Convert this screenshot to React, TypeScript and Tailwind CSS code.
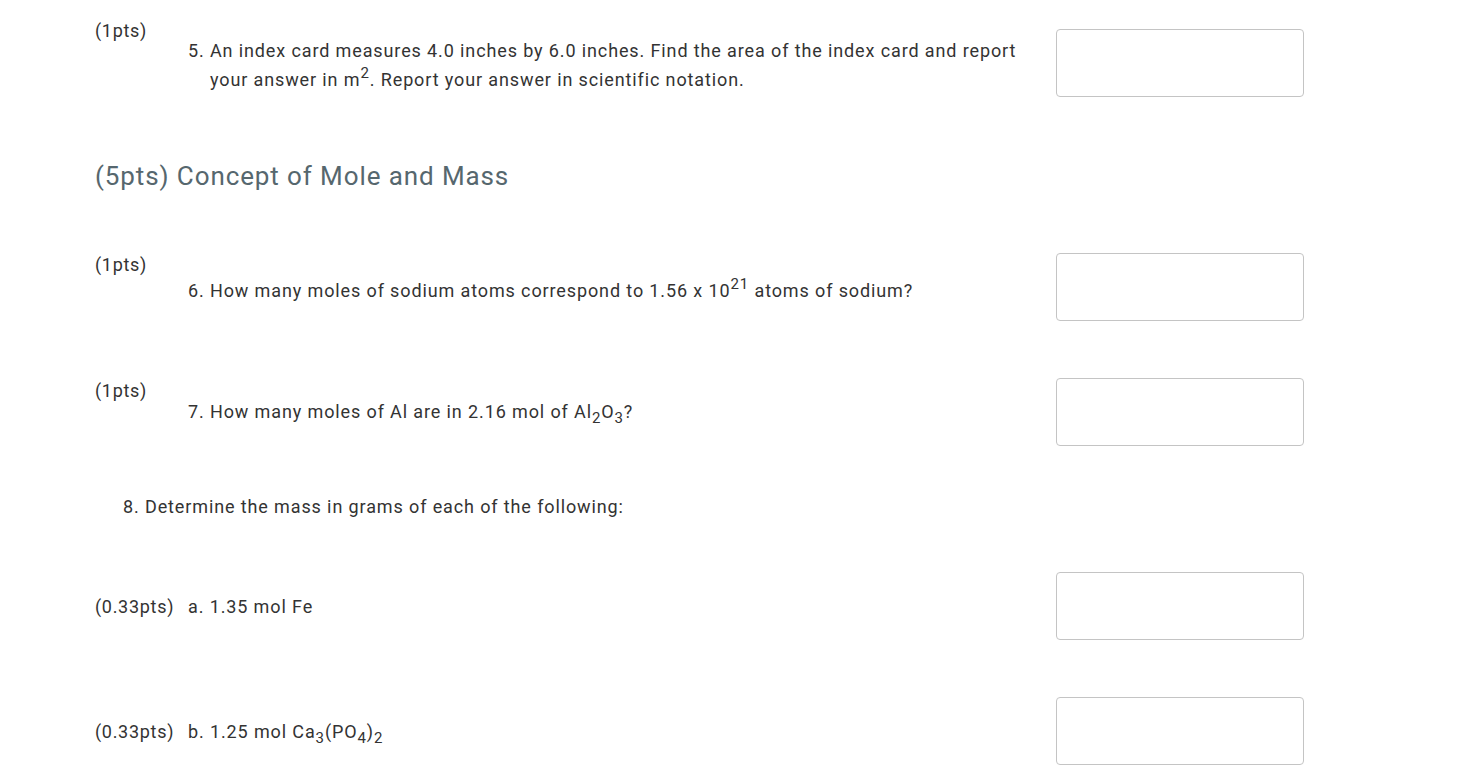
import React from "react";

const Box = ({ className = "" }: { className?: string }) => (
  <div className={`w-[248px] h-[68px] shrink-0 rounded-[4px] border border-[#c4c4c4] bg-white ${className}`} />
);

const Sup = ({ children }: { children: React.ReactNode }) => (
  <sup className="text-[15px] top-[-0.55em]">{children}</sup>
);
const Sub = ({ children }: { children: React.ReactNode }) => (
  <sub className="text-[15px] bottom-[-0.3em]">{children}</sub>
);

export default function App() {
  return (
    <div
      className="min-h-screen bg-white text-[#333333] text-[18px] tracking-[0.88px]"
      style={{ fontFamily: "Roboto, 'Liberation Sans', sans-serif" }}
    >
      <div className="ml-[95px] w-[1209px] pt-[17px] flex flex-col">
        {/* Q5 */}
        <div className="flex items-start">
          <div className="w-[93px] shrink-0 leading-[28px] tracking-[0.7px]">(1pts)</div>
          <div className="flex-1 mt-[19px] leading-[29px]">
            <div className="whitespace-nowrap">
              5. An index card measures 4.0 inches by 6.0 inches. Find the area of the index card and report
            </div>
            <div className="whitespace-nowrap pl-[22px]">
              your answer in m<Sup>2</Sup>. Report your answer in scientific notation.
            </div>
          </div>
          <Box className="mt-[12px]" />
        </div>

        {/* Heading */}
        <h2 className="mt-[61px] text-[26px] leading-[36px] text-[#56676e] font-normal tracking-[0.9px]">
          (5pts) Concept of Mole and Mass
        </h2>

        {/* Q6 */}
        <div className="flex items-start mt-[57px]">
          <div className="w-[93px] shrink-0 leading-[28px] tracking-[0.7px]">(1pts)</div>
          <div className="flex-1 mt-[25px] leading-[29px] whitespace-nowrap">
            6. How many moles of sodium atoms correspond to 1.56 x 10<Sup>21</Sup> atoms of sodium?
          </div>
          <Box className="mt-[2px]" />
        </div>

        {/* Q7 */}
        <div className="flex items-start mt-[56px]">
          <div className="w-[93px] shrink-0 leading-[28px] tracking-[0.7px]">(1pts)</div>
          <div className="flex-1 mt-[20px] leading-[29px] whitespace-nowrap">
            7. How many moles of Al are in 2.16 mol of Al<Sub>2</Sub>O<Sub>3</Sub>?
          </div>
          <Box className="mt-[1px]" />
        </div>

        {/* Q8 */}
        <div className="mt-[47px] pl-[28px] leading-[28px]">
          8. Determine the mass in grams of each of the following:
        </div>

        {/* a */}
        <div className="flex items-center mt-[51px]">
          <div className="w-[93px] shrink-0 leading-[28px] pt-[2px] tracking-[0.7px]">(0.33pts)</div>
          <div className="flex-1 leading-[28px] pt-[2px]">a. 1.35 mol Fe</div>
          <Box />
        </div>

        {/* b */}
        <div className="flex items-center mt-[57px]">
          <div className="w-[93px] shrink-0 leading-[28px] pt-[2px] tracking-[0.7px]">(0.33pts)</div>
          <div className="flex-1 leading-[28px] pt-[2px]">
            b. 1.25 mol Ca<Sub>3</Sub>(PO<Sub>4</Sub>)<Sub>2</Sub>
          </div>
          <Box />
        </div>
      </div>
    </div>
  );
}
